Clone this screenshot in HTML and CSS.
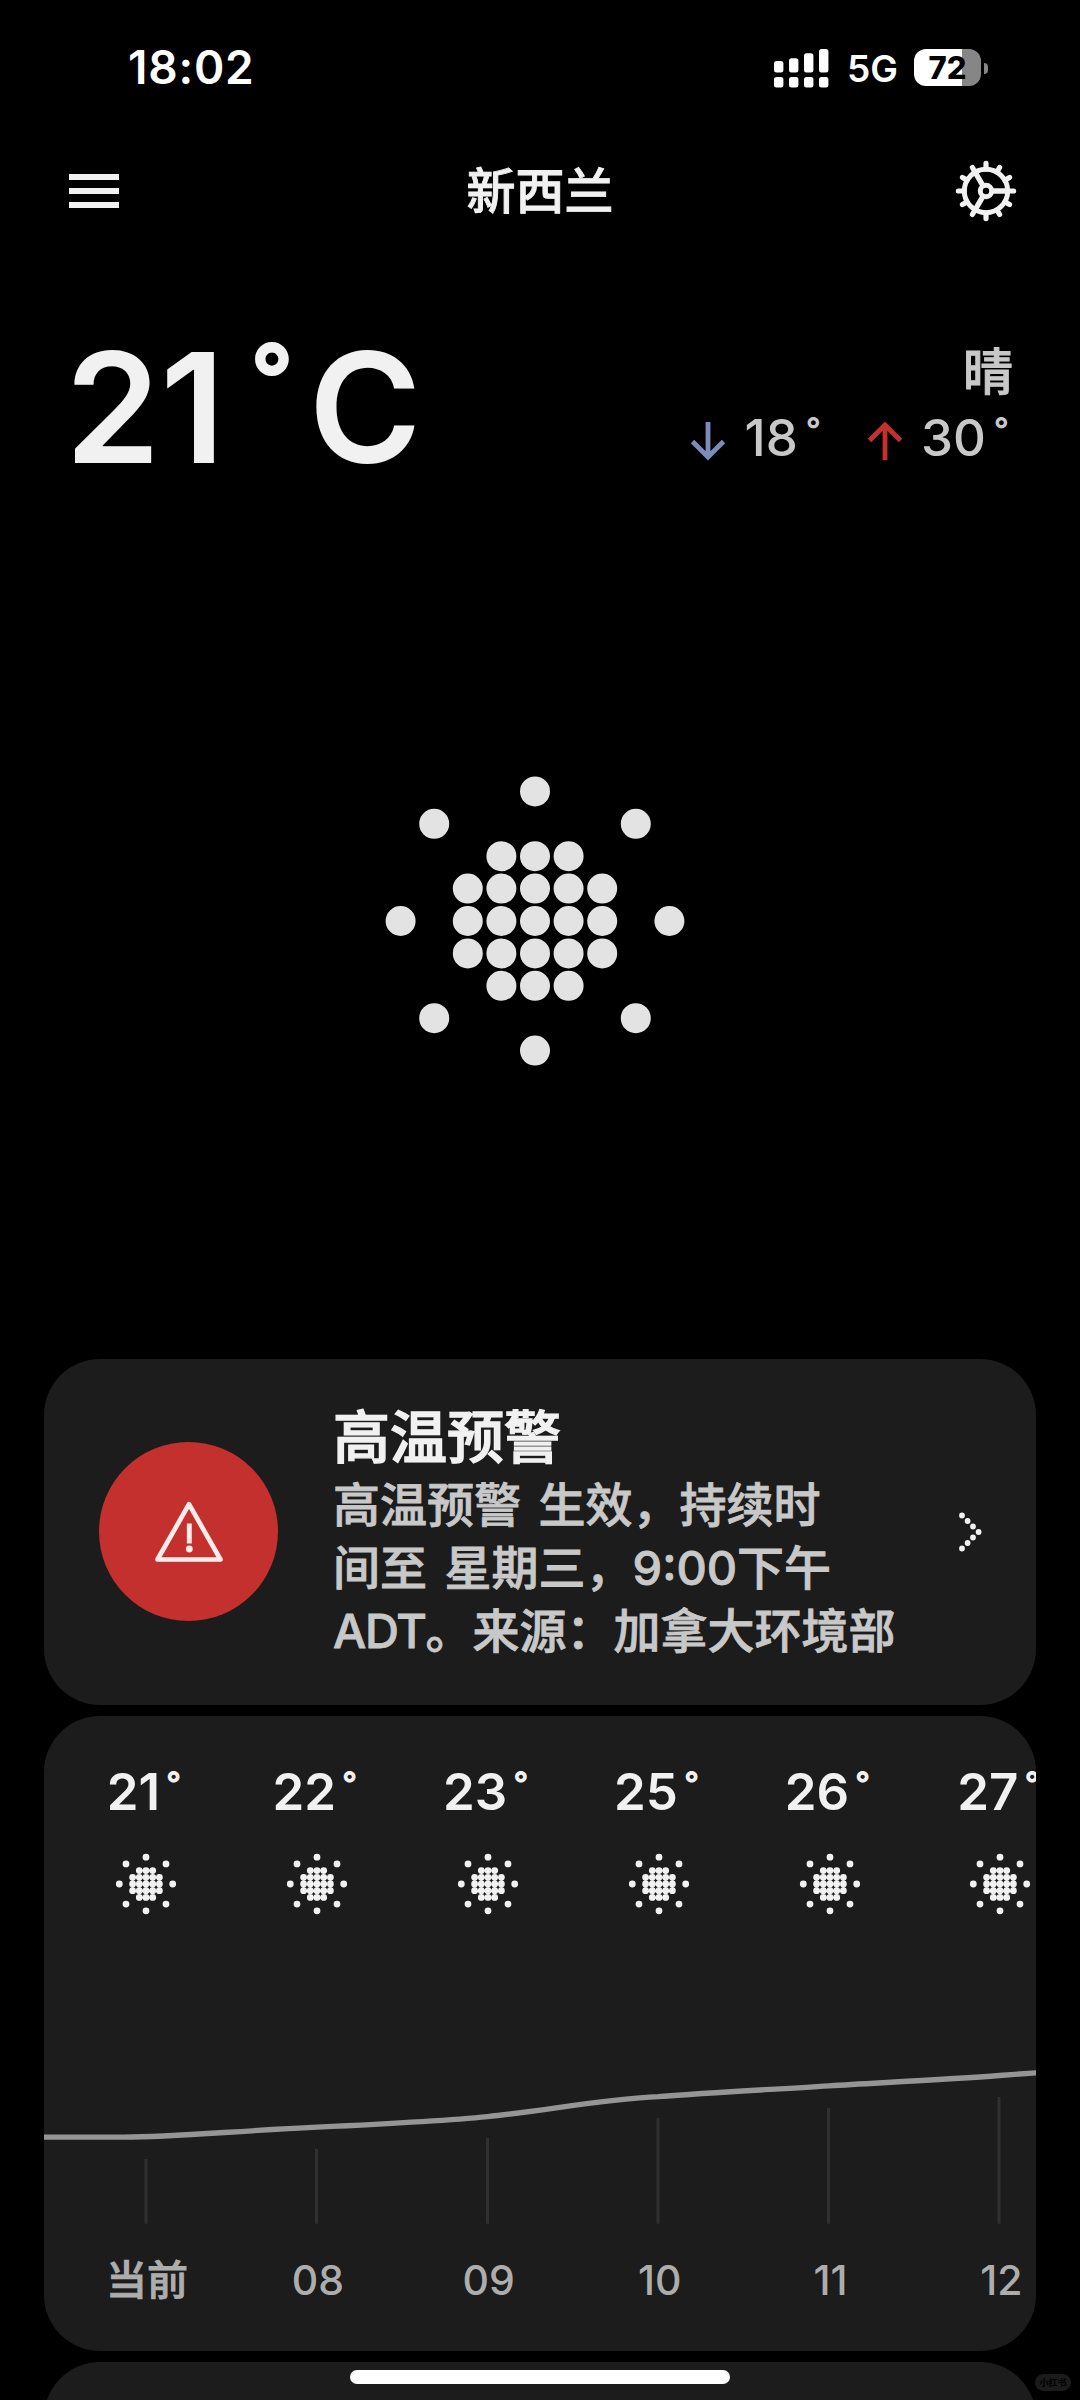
FILE: index.html
```html
<!DOCTYPE html>
<html lang="zh-CN">
<head>
<meta charset="utf-8">
<title>天气</title>
<link rel="stylesheet" href="styles.css">
</head>
<body>
<svg class="defs" width="0" height="0" aria-hidden="true">
  <symbol id="sun" viewBox="-31 -31 62 62">
    <path class="dots" d="M0-26.8h0M-20-20.1h0M20-20.1h0M-26.7 0h0M26.7 0h0M-20 20.1h0M20 20.1h0M0 26.8h0M-6.7-13.4h0M0-13.4h0M6.7-13.4h0M-13.4-6.7h0M-6.7-6.7h0M0-6.7h0M6.7-6.7h0M13.4-6.7h0M-13.4 0h0M-6.7 0h0M0 0h0M6.7 0h0M13.4 0h0M-13.4 6.7h0M-6.7 6.7h0M0 6.7h0M6.7 6.7h0M13.4 6.7h0M-6.7 13.4h0M0 13.4h0M6.7 13.4h0"/>
  </symbol>
</svg>
<div class="screen">
  <div class="status">
    <span class="clock">18:02</span>
    <div class="status-right">
      <svg class="signal" width="55" height="39" viewBox="0 0 55 39" fill="#fff">
        <rect x="0" y="12" width="9.4" height="11.6" rx="2.5"/><rect x="15" y="9.2" width="9.4" height="14.4" rx="2.5"/><rect x="30" y="4.3" width="9.4" height="19.3" rx="2.5"/><rect x="45" y="0" width="9.4" height="23.6" rx="2.5"/>
        <rect x="0" y="28" width="9.4" height="10.4" rx="2.5"/><rect x="15" y="28" width="9.4" height="10.4" rx="2.5"/><rect x="30" y="28" width="9.4" height="10.4" rx="2.5"/><rect x="45" y="28" width="9.4" height="10.4" rx="2.5"/>
      </svg>
      <span class="net">5G</span>
      <div class="battery"><span>72</span></div>
      <i class="nub"></i>
    </div>
  </div>

  <header class="header">
    <div class="menu"><i></i><i></i><i></i></div>
    <h1>新西兰</h1>
    <svg class="gear" width="62" height="62" viewBox="-31 -31 62 62" fill="none" stroke="#f1f1f1">
      <circle r="21.7" stroke-width="5"/>
      <circle r="5.7" stroke-width="5"/>
      <path stroke-width="5.4" d="M7 0H22M-3.5-6.1L-11-19M-3.5 6.1L-11 19"/>
      <g stroke-width="5.2" stroke-linecap="round">
        <path d="M22 0h5.6M-22 0h-5.6M0 22v5.6M0-22v-5.6"/>
        <path transform="rotate(30)" d="M22 0h5.2M-22 0h-5.2M0 22v5.2M0-22v-5.2"/>
        <path transform="rotate(60)" d="M22 0h5.2M-22 0h-5.2M0 22v5.2M0-22v-5.2"/>
      </g>
    </svg>
  </header>

  <section class="now">
    <div class="temp"><span>21</span><span class="deg">°</span><span>C</span></div>
    <div class="summary">
      <div class="cond">晴</div>
      <div class="range">
        <svg width="36" height="40" viewBox="0 0 36 40" fill="none" stroke="#7d8cb9" stroke-width="4.8"><path d="M18 1v35M2.5 20.5L18 36l15.5-15.5"/></svg>
        <span class="lo">18</span><span class="deg">°</span>
        <svg class="up" width="36" height="40" viewBox="0 0 36 40" fill="none" stroke="#c4302d" stroke-width="4.8"><path d="M18 39V4M2.5 19.5L18 4l15.5 15.5"/></svg>
        <span class="hi">30</span><span class="deg">°</span>
      </div>
    </div>
  </section>

  <div class="hero">
    <svg width="300" height="290" viewBox="-150 -145 300 290">
      <path class="dots-lg" d="M0-129.6h0M-100.8-97.2h0M100.8-97.2h0M-134.4 0h0M134.4 0h0M-100.8 97.2h0M100.8 97.2h0M0 129.6h0M-33.6-64.8h0M0-64.8h0M33.6-64.8h0M-67.2-32.4h0M-33.6-32.4h0M0-32.4h0M33.6-32.4h0M67.2-32.4h0M-67.2 0h0M-33.6 0h0M0 0h0M33.6 0h0M67.2 0h0M-67.2 32.4h0M-33.6 32.4h0M0 32.4h0M33.6 32.4h0M67.2 32.4h0M-33.6 64.8h0M0 64.8h0M33.6 64.8h0"/>
    </svg>
  </div>

  <main class="cards">
    <section class="card alert">
      <div class="badge">
        <svg width="70" height="62" viewBox="0 0 70 62" fill="none" stroke="#fdecea" stroke-width="4.7" stroke-linejoin="round">
          <path d="M35 3.2L66.5 58.5H3.5Z"/>
          <path d="M35.3 22.5V42.5" stroke-width="4.9"/>
          <circle cx="35.3" cy="48" r="3.4" fill="#fdecea" stroke="none"/>
        </svg>
      </div>
      <div class="alert-text">
        <h2>高温预警</h2>
        <p>高温预警 生效，持续时<br>间至 星期三，9:00下午<br><span class="zone">ADT</span>。来源：加拿大环境部</p>
      </div>
      <svg class="chevron" width="24" height="40" viewBox="0 0 24 40"><path d="M3 3.5h0M8.6 9h0M14 14.5h0M19.6 20h0M14 25.5h0M8.6 31h0M3 36.5h0"/></svg>
    </section>

    <section class="card hourly">
      <div class="hours temps">
        <div>21<span class="deg">°</span></div><div>22<span class="deg">°</span></div><div>23<span class="deg">°</span></div><div>25<span class="deg">°</span></div><div>26<span class="deg">°</span></div><div>27<span class="deg">°</span></div>
      </div>
      <div class="hours icons">
        <svg><use href="#sun"/></svg><svg><use href="#sun"/></svg><svg><use href="#sun"/></svg><svg><use href="#sun"/></svg><svg><use href="#sun"/></svg><svg><use href="#sun"/></svg>
      </div>
      <svg class="chart" width="992" height="170" viewBox="0 0 992 170" fill="none">
        <path stroke="#303030" stroke-width="3" d="M102 105V169.7M272.5 95V169.7M443.5 84V169.7M614 64V169.7M784.5 54V169.7M955 43V169.7"/>
        <path stroke="#959595" stroke-width="5.3" d="M-4 83.2H80C130 83 190 77 273 73.2C350 69.5 400 67 443.5 62.6C500 57 560 45 614.3 42.7C670 38 730 35.5 785 31.8C850 28 910 25 955.5 21.5L996 18.5"/>
      </svg>
      <div class="hours labels">
        <div class="cjk">当前</div><div>08</div><div>09</div><div>10</div><div>11</div><div>12</div>
      </div>
    </section>

    <section class="card next"></section>
  </main>
  <div class="home"></div>
  <div class="mark">小红书</div>
</div>
</body>
</html>
```
FILE: styles.css
```css
* { box-sizing: border-box; margin: 0; padding: 0; }
body { background: #000; font-family: "Inter", "Noto Sans CJK SC", sans-serif; }
svg { display: block; flex: none; }
.defs { position: absolute; }
.screen { position: relative; width: 1080px; height: 2400px; overflow: hidden; background: #000; color: #f1f1f1; display: flex; flex-direction: column; }

.status { height: 135px; flex: none; display: flex; justify-content: space-between; padding: 0 92px 0 128px; color: #fff; align-items: center; }
.clock { font-size: 46px; font-weight: 600; line-height: 60px; letter-spacing: 0.8px; padding-bottom: 1px; }
.status-right { display: flex; align-items: center; }
.signal { margin-top: 1px; }
.net { font-size: 37px; font-weight: 600; line-height: 40px; margin: 2px 0 0 18px; width: 67px; }
.battery { width: 67px; height: 37px; border-radius: 12px; background: linear-gradient(90deg, #fff 72%, #868686 72%); color: #000; display: flex; align-items: center; justify-content: center; font-size: 31px; font-weight: 800; line-height: 37px; }
.nub { width: 4px; height: 11px; margin: 2px 0 0 3px; border-radius: 0 5px 5px 0; background: #868686; }

.header { height: 112px; flex: none; display: flex; align-items: center; justify-content: space-between; padding: 0 63px 0 69px; }
.menu { display: flex; flex-direction: column; gap: 8px; width: 56px; }
.menu i { width: 50px; height: 6px; background: #f1f1f1; }
h1 { font-size: 49px; font-weight: 500; line-height: 60px; padding-top: 1px; -webkit-text-stroke: 0.9px; }

.now { height: 260px; flex: none; display: flex; justify-content: space-between; padding: 81px 67px 0 65px; }
.temp { display: flex; height: 160px; font-size: 153px; font-weight: 600; line-height: 160px; align-items: flex-start; }
.temp .deg { font-size: 95px; font-weight: 800; line-height: 99px; margin: 0 15px 0 25px; }
.summary { display: flex; flex-direction: column; align-items: flex-end; padding-top: 12px; color: #c8c8c8; font-weight: 500; }
.cond { font-size: 50px; line-height: 65px; -webkit-text-stroke: 1px; }
.range { display: flex; align-items: center; font-size: 51px; line-height: 66px; }
.range svg { margin: 5px 18px 0 0; }
.range .up { margin-left: 46px; }
.range .deg { align-self: flex-start; font-size: 33px; font-weight: 700; line-height: 48px; margin-left: 8px; }
.range .deg:last-child { margin-right: 4px; }

.hero { height: 852px; flex: none; display: flex; justify-content: center; padding: 268.7px 9.4px 0 0; }
.dots, .dots-lg, .chevron path { stroke-linecap: round; fill: none; }
.dots { stroke: #f1f1f1; stroke-width: 6.8px; }
.dots-lg { stroke: #e3e3e3; stroke-width: 30px; }

.cards { flex: 1; display: flex; flex-direction: column; gap: 11.5px; padding: 0 44px; }
.card { background: #1c1c1c; border-radius: 56px; flex: none; overflow: hidden; }
.alert { height: 345.5px; display: flex; align-items: center; padding: 0 53px 0 55px; }
.badge { width: 179px; height: 179px; border-radius: 50%; background: #c4302d; display: flex; align-items: center; justify-content: center; padding-left: 1px; }
.alert-text { flex: 1; margin-left: 55px; padding-top: 2px; white-space: nowrap; -webkit-text-stroke: 0.8px; }
h2 { font-size: 57px; font-weight: 500; line-height: 70px; -webkit-text-stroke: 1.4px; }
.alert-text p { font-size: 47px; font-weight: 500; line-height: 63px; color: #c8c8c8; word-spacing: 5px; }
.zone { letter-spacing: -1.3px; }
.chevron path { stroke: #f1f1f1; stroke-width: 5.8px; }

.hourly { height: 634.5px; padding-top: 46px; }
.hours { display: grid; grid-template-columns: repeat(6, 170.9px); margin-left: 16.5px; justify-items: center; }
.temps > div { display: flex; align-items: flex-start; font-size: 51px; font-weight: 600; line-height: 60px; padding-right: 4px; }
.temps .deg { font-size: 33px; font-weight: 800; line-height: 43px; margin-left: 6px; }
.icons { margin-top: 31px; }
.icons svg { width: 62px; height: 62px; }
.chart { margin-top: 139px; }
.labels { margin-top: 26px; font-size: 41px; font-weight: 500; line-height: 60px; color: #adadad; padding-left: 1px; }
.labels .cjk { -webkit-text-stroke: 0.8px; }
.next { height: 200px; }

.home { position: absolute; left: 350px; top: 2370px; width: 380px; height: 13.5px; border-radius: 7px; background: #fff; }
.mark { position: absolute; left: 1035px; top: 2374px; width: 36px; height: 17px; border-radius: 9px; background: #1b1b1b; color: #000; font-size: 9px; font-weight: 700; line-height: 17px; text-align: center; }
```
